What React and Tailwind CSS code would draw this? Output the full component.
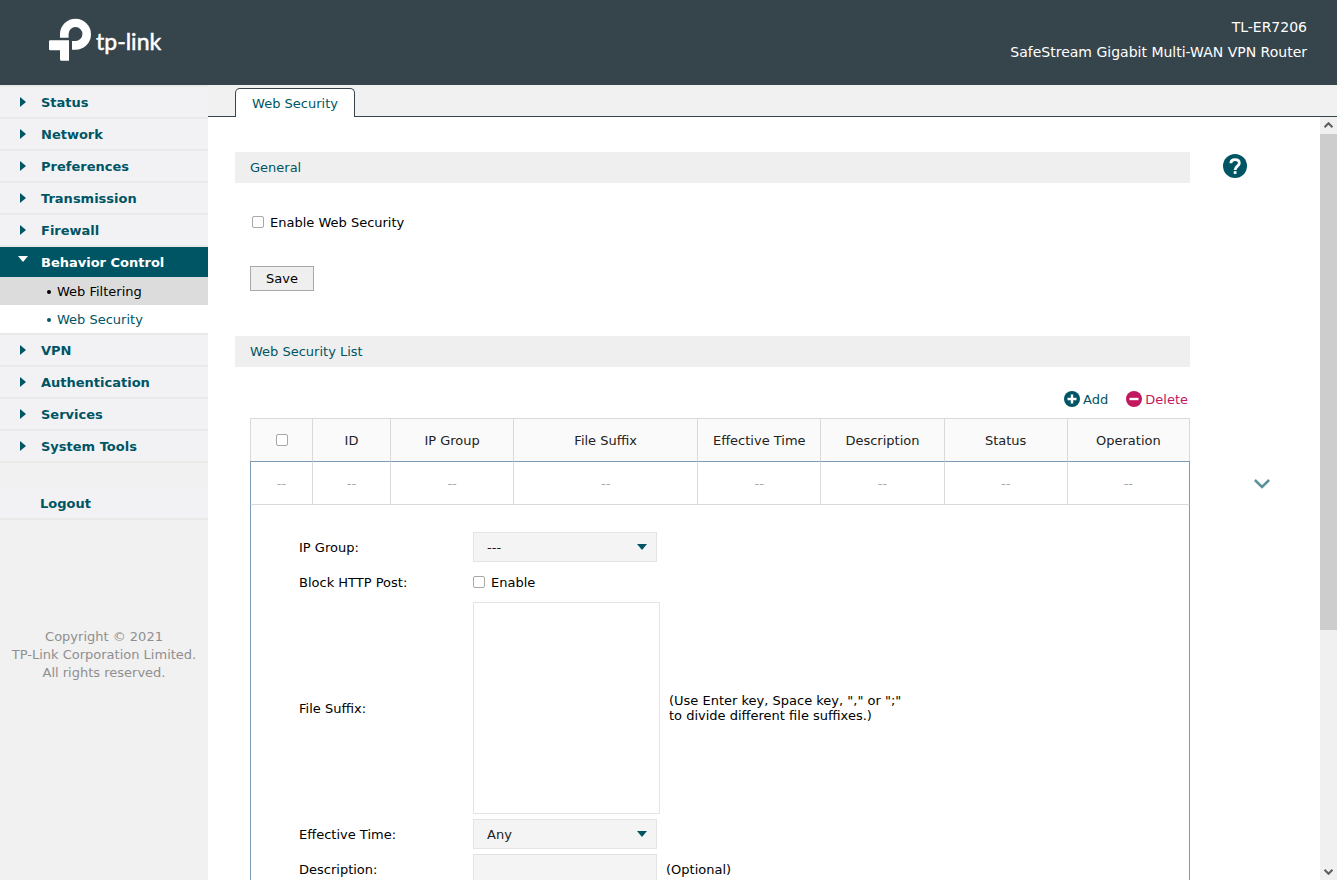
import { useState } from "react";

const menuTop = ["Status", "Network", "Preferences", "Transmission", "Firewall"];
const menuBottom = ["VPN", "Authentication", "Services", "System Tools"];

const columns = [
  { label: "ID", width: "w-[78px]" },
  { label: "IP Group", width: "" },
  { label: "File Suffix", width: "w-[184px]" },
  { label: "Effective Time", width: "" },
  { label: "Description", width: "" },
  { label: "Status", width: "" },
  { label: "Operation", width: "" },
];

const checkboxClass =
  "size-3 shrink-0 appearance-none rounded-xs border border-[#a8a8a8] bg-white checked:bg-[#005564]";

const Logo = () => (
  <svg width="114" height="46" viewBox="0 0 114 46" role="img" aria-label="tp-link">
    <g fill="#fff">
      <path d="M11 19.800V15.900A15.500 15.500 0 1 1 26.500 31.800H23V22.900H26.300A6.900 6.900 0 1 0 19.600 15.900V19.800Z" />
      <path d="M1.200 22.300H20V42.800H12.500Q11 42.800 11 41.300V32.200H1.200Q0 32.200 0 31V23.500Q0 22.300 1.200 22.300Z" />
    </g>
    <text
      x="47"
      y="32"
      fill="#fff"
      stroke="#fff"
      strokeWidth="0.5"
      fontSize="23"
      fontFamily="Lato, sans-serif"
    >
      tp-link
    </text>
  </svg>
);

const RightArrow = () => (
  <svg width="6" height="10" viewBox="0 0 6 10" fill="currentColor">
    <path d="M0 0L6 5L0 10Z" />
  </svg>
);

const DownArrow = ({ className = "" }) => (
  <svg width="10" height="6" viewBox="0 0 10 6" fill="currentColor" className={className}>
    <path d="M0 0H10L5 6Z" />
  </svg>
);

const MenuItem = ({ label }) => (
  <li className="h-8 border-b-2 border-[#e9e9e8] bg-[#f2f2f5]">
    <a href="#" className="flex h-full items-center pl-5 font-bold text-[#005564]">
      <span className="w-[21px]">
        <RightArrow />
      </span>
      {label}
    </a>
  </li>
);

const Sidebar = () => (
  <nav className="w-[208px] shrink-0 bg-[#f1f1f1]">
    <ul className="border-t-2 border-[#e9e9e8]">
      {menuTop.map((label) => (
        <MenuItem key={label} label={label} />
      ))}
      <li className="border-b-2 border-[#e9e9e8]">
        <a
          href="#"
          className="flex h-[30px] items-center bg-[#005564] pl-[18px] font-bold text-white"
        >
          <span className="w-[23px] pb-1.5">
            <DownArrow />
          </span>
          Behavior Control
        </a>
        <ul>
          <li className="bg-[#dcdcdc] text-black">
            <a href="#" className="flex h-7 items-center pl-[47px]">
              <span className="mr-1.5 mt-0.5 size-1 rounded-full bg-current" />
              Web Filtering
            </a>
          </li>
          <li className="bg-white text-[#005564]">
            <a href="#" className="flex h-7 items-center pl-[47px]">
              <span className="mr-1.5 mt-0.5 size-1 rounded-full bg-current" />
              Web Security
            </a>
          </li>
        </ul>
      </li>
      {menuBottom.map((label) => (
        <MenuItem key={label} label={label} />
      ))}
    </ul>
    <a
      href="#"
      className="mt-[25px] flex h-8 items-center border-b-2 border-[#e9e9e8] bg-[#f2f2f5] pl-10 font-bold text-[#005564]"
    >
      Logout
    </a>
    <p className="mt-[108px] text-center leading-[18px] text-[#8f8f8f]">
      Copyright © 2021
      <br />
      TP-Link Corporation Limited.
      <br />
      All rights reserved.
    </p>
  </nav>
);

const SectionTitle = ({ children }) => (
  <h2 className="flex h-[31px] flex-1 items-center bg-[#efefef] pl-[15px] text-[#005564]">
    {children}
  </h2>
);

const SelectBox = ({ id, children }) => (
  <div className="relative">
    <select
      id={id}
      className="h-[30px] w-[184px] appearance-none border border-[#e4e4e4] bg-[#f4f4f4] pl-[13px] pt-px text-[#222]"
    >
      {children}
    </select>
    <DownArrow className="pointer-events-none absolute right-2.5 top-3 text-[#005564]" />
  </div>
);

const Label = ({ htmlFor, children }) => (
  <label htmlFor={htmlFor} className="w-[174px] shrink-0">
    {children}
  </label>
);

const Scrollbar = () => (
  <div className="flex w-[17px] shrink-0 flex-col bg-[#f0f0f0] text-[#606060]">
    <button aria-label="Scroll up" className="flex h-[17px] items-center justify-center">
      <svg width="9" height="7" viewBox="0 0 9 7" fill="none" stroke="currentColor" strokeWidth="2.2">
        <path d="M0.500 5.300L4.500 1.300L8.500 5.300" />
      </svg>
    </button>
    <div className="flex-1">
      <div className="h-[68%] bg-[#cdcdcd]" />
    </div>
    <button aria-label="Scroll down" className="flex h-[17px] items-center justify-center">
      <svg width="9" height="7" viewBox="0 0 9 7" fill="none" stroke="currentColor" strokeWidth="2.2">
        <path d="M0.500 1.700L4.500 5.700L8.500 1.700" />
      </svg>
    </button>
  </div>
);

const SecurityTable = () => (
  <table className="w-full table-fixed border-separate border-spacing-0 text-center">
    <thead>
      <tr className="h-[43px] bg-[#fafafa] text-[#222]">
        <th className="w-[62px] border-l border-t border-[#d9d9d9]">
          <input
            type="checkbox"
            aria-label="Select all"
            className={`${checkboxClass} block mx-auto`}
          />
        </th>
        {columns.map((col) => (
          <th
            key={col.label}
            className={`${col.width} border-l border-t border-[#d9d9d9] font-normal last:border-r`}
          >
            {col.label}
          </th>
        ))}
      </tr>
    </thead>
    <tbody>
      <tr className="h-11 text-[#aaa]">
        <td className="border-b border-l border-t border-b-[#d9d9d9] border-l-[#7a9ab5] border-t-[#7a9ab5]">
          --
        </td>
        {columns.map((col) => (
          <td
            key={col.label}
            className="border-b border-l border-t border-b-[#d9d9d9] border-l-[#d9d9d9] border-t-[#7a9ab5] last:border-r last:border-r-[#7a9ab5]"
          >
            --
          </td>
        ))}
      </tr>
    </tbody>
  </table>
);

const EntryForm = () => {
  const [suffixes, setSuffixes] = useState("");

  return (
    <form className="border-x border-[#7a9ab5] pb-10 pl-12 pt-[27px]">
      <div className="flex items-center">
        <Label htmlFor="ip-group">IP Group:</Label>
        <SelectBox id="ip-group">
          <option>---</option>
        </SelectBox>
      </div>
      <div className="flex h-10 items-center">
        <span className="w-[174px] shrink-0">Block HTTP Post:</span>
        <label className="flex items-center gap-1.5">
          <input type="checkbox" className={checkboxClass} />
          Enable
        </label>
      </div>
      <div className="flex items-center">
        <Label htmlFor="file-suffix">File Suffix:</Label>
        <textarea
          id="file-suffix"
          value={suffixes}
          onChange={(e) => setSuffixes(e.target.value)}
          className="h-[212px] w-[187px] resize-none border border-[#e4e4e4] bg-white p-2"
        />
        <p className="ml-[9px] leading-[15px]">
          (Use Enter key, Space key, "," or ";"
          <br />
          to divide different file suffixes.)
        </p>
      </div>
      <div className="mt-[5px] flex items-center">
        <Label htmlFor="effective-time">Effective Time:</Label>
        <SelectBox id="effective-time">
          <option>Any</option>
        </SelectBox>
      </div>
      <div className="mt-[5px] flex items-center">
        <Label htmlFor="description">Description:</Label>
        <input
          id="description"
          type="text"
          className="h-[30px] w-[184px] border border-[#e4e4e4] bg-[#f4f4f4] px-3"
        />
        <span className="ml-[9px]">(Optional)</span>
      </div>
    </form>
  );
};

const App = () => (
  <div className="flex h-screen flex-col overflow-hidden bg-white font-['Verdana','DejaVu_Sans',sans-serif] text-[13px] leading-[21px] text-black">
    {/* Header */}
    <header className="flex h-[85px] shrink-0 items-start justify-between bg-[#36444b] pl-[49px] pr-[30px] pt-[18px] text-white">
      <Logo />
      <div className="-mt-[3px] text-right text-[14px] leading-[25px]">
        <p>TL-ER7206</p>
        <p>SafeStream Gigabit Multi-WAN VPN Router</p>
      </div>
    </header>

    <div className="flex min-h-0 flex-1">
      <Sidebar />

      <div className="flex min-w-0 flex-1 flex-col">
        {/* Tabs */}
        <div className="flex h-8 shrink-0 items-end border-b border-[#36444b] bg-[#f1f1f1] pl-[27px]">
          <button className="-mb-px h-[29px] w-[120px] rounded-t-[5px] border border-b-0 border-[#36444b] bg-white text-[#005564]">
            Web Security
          </button>
        </div>

        <div className="flex min-h-0 flex-1">
          <main className="min-w-0 flex-1 overflow-hidden pl-[27px] pt-[35px]">
            {/* General */}
            <div className="flex">
              <SectionTitle>General</SectionTitle>
              <div className="w-[130px] pl-[33px] pt-0.5">
                <button aria-label="Help" className="block">
                  <svg width="24" height="24" viewBox="0 0 24 24">
                    <circle cx="12" cy="12" r="12" fill="#005564" />
                    <path
                      d="M7.900 9.300C7.900 7 9.700 5.700 12.100 5.700C14.600 5.700 16.300 7.100 16.300 9.200C16.300 12 12.100 12.400 12.100 16"
                      fill="none"
                      stroke="#fff"
                      strokeWidth="2.800"
                    />
                    <path d="M10.700 17.200H13.500V19.900H10.700Z" fill="#fff" />
                  </svg>
                </button>
              </div>
            </div>
            <div className="pl-[15px]">
              <label className="mt-[29px] flex h-5 items-center gap-1.5 pl-0.5">
                <input type="checkbox" className={checkboxClass} />
                Enable Web Security
              </label>
              <button className="mt-[34px] block h-[25px] w-16 border border-[#a8a8a8] bg-[#efefef]">
                Save
              </button>
            </div>

            {/* Web security list */}
            <div className="mr-[130px] mt-[45px] flex">
              <SectionTitle>Web Security List</SectionTitle>
            </div>
            <div className="mr-[130px] mt-[22px] flex h-5 justify-end gap-[18px] pr-0.5">
              <button className="flex items-center gap-[3px] text-[#005564]">
                <svg width="16" height="16" viewBox="0 0 16 16">
                  <circle cx="8" cy="8" r="8" fill="#005564" />
                  <path d="M3.500 8H12.500M8 3.500V12.500" stroke="#fff" strokeWidth="2.400" />
                </svg>
                Add
              </button>
              <button className="flex items-center gap-[3px] text-[#c2185f]">
                <svg width="16" height="16" viewBox="0 0 16 16">
                  <circle cx="8" cy="8" r="8" fill="#c2185f" />
                  <path d="M3.500 8H12.500" stroke="#fff" strokeWidth="2.400" />
                </svg>
                Delete
              </button>
            </div>
            <div className="mt-[9px] flex items-start pl-[15px]">
              <div className="min-w-0 flex-1">
                <SecurityTable />
                <EntryForm />
              </div>
              <div className="w-[130px] pl-16 pt-[61px]">
                <button aria-label="Collapse" className="block">
                  <svg
                    width="16"
                    height="10"
                    viewBox="0 0 16 10"
                    fill="none"
                    stroke="#5a919b"
                    strokeWidth="2.5"
                  >
                    <path d="M0.900 1L8 7.900L15.100 1" />
                  </svg>
                </button>
              </div>
            </div>
          </main>
          <Scrollbar />
        </div>
      </div>
    </div>
  </div>
);

export default App;
